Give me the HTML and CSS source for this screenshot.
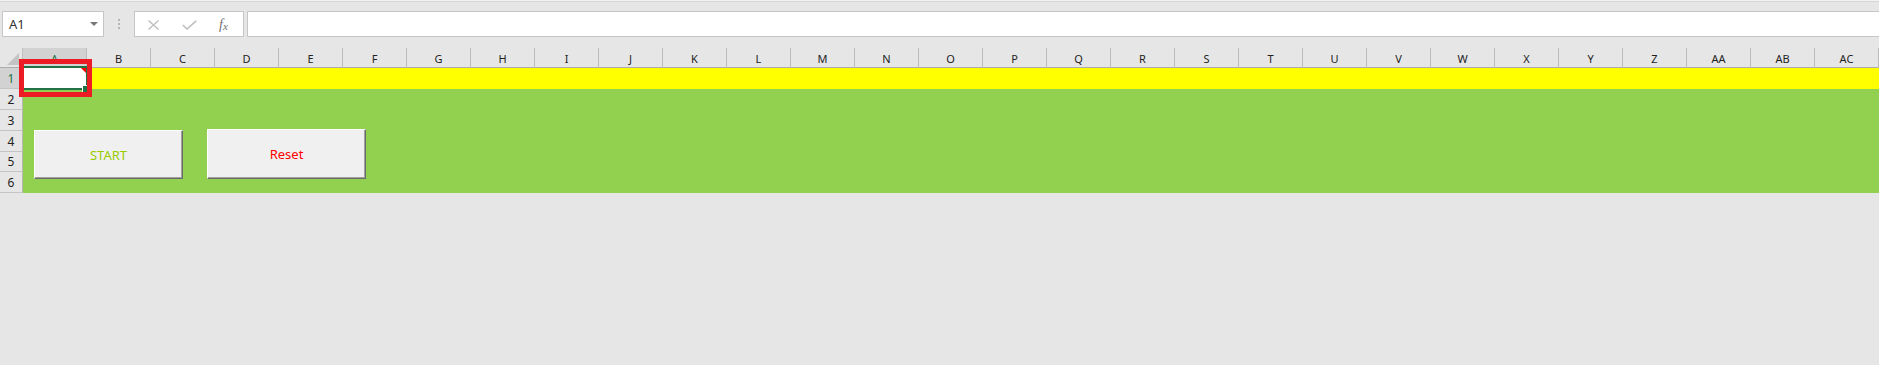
FILE: index.html
```html
<!DOCTYPE html>
<html lang="de">

<head>
    <meta charset="UTF-8">
    <title>Tabelle</title>
    <link rel="stylesheet" href="styles.css">
</head>

<body>

    <!-- Namensfeld und Bearbeitungsleiste -->
    <div class="toolbar">
        <div class="name-box">
            <span>A1</span>
            <span class="caret"></span>
        </div>
        <div class="grip"><i></i><i></i><i></i></div>
        <div class="fx-buttons">
            <svg width="13" height="10" viewBox="0 0 13 10">
                <path d="M1.5 0.5 L11.5 9.5 M11.5 0.5 L1.5 9.5" stroke="#bfbfbf" stroke-width="1.4" fill="none" />
            </svg>
            <svg width="15" height="10" viewBox="0 0 15 10">
                <path d="M0.8 5 L5 9 L14.2 0.8" stroke="#bfbfbf" stroke-width="1.6" fill="none" />
            </svg>
            <span class="fx">f<sub>x</sub></span>
        </div>
        <div class="formula-input"></div>
    </div>

    <!-- Tabellenblatt -->
    <div class="sheet">
        <div class="grid" id="grid">
            <div class="corner"><span class="corner-tri"></span></div>
        </div>

        <div class="selection">
            <span class="comment-mark"></span>
            <span class="fill-handle"></span>
        </div>
        <div class="red-frame"></div>

        <button class="sheet-btn btn-start">START</button>
        <button class="sheet-btn btn-reset">Reset</button>
    </div>

    <script>
        // Spaltenköpfe und Zeilen aufbauen
        const grid = document.getElementById('grid');
        const cols = [];
        for (let i = 0; i < 29; i++) {
            let name = '';
            let n = i;
            if (n >= 26) {
                name = String.fromCharCode(65 + Math.floor(n / 26) - 1);
                n = n % 26;
            }
            cols.push(name + String.fromCharCode(65 + n));
        }

        cols.forEach((c, i) => {
            const head = document.createElement('div');
            head.className = 'col-head' + (i === 0 ? ' active' : '');
            head.textContent = c;
            grid.appendChild(head);
        });

        for (let r = 1; r <= 6; r++) {
            const rh = document.createElement('div');
            rh.className = 'row-head' + (r === 1 ? ' active' : '');
            rh.style.gridRow = r + 1;
            rh.textContent = r;
            grid.appendChild(rh);
        }

        const a1 = document.createElement('div');
        a1.className = 'cell-a1';
        grid.appendChild(a1);

        const yellow = document.createElement('div');
        yellow.className = 'band-yellow';
        grid.appendChild(yellow);

        const green = document.createElement('div');
        green.className = 'band-green';
        grid.appendChild(green);
    </script>

</body>

</html>
```

FILE: styles.css
```css
/* Basis */
* {
    margin: 0;
    padding: 0;
    box-sizing: border-box;
}

body {
    background: #e6e6e6;
    font-family: 'Noto Sans', 'Liberation Sans', sans-serif;
    width: 1879px;
    height: 365px;
    overflow: hidden;
}

/* Bearbeitungsleiste */
.toolbar {
    height: 48px;
    display: flex;
    align-items: flex-start;
    padding: 10px 0 0 2px;
    border-top: 1px solid #f2f2f2;
    box-shadow: inset 0 1px 0 #d6d6d6;
}

.name-box {
    width: 102px;
    height: 26px;
    background: #fff;
    border: 1px solid #c6c6c6;
    display: flex;
    align-items: center;
    justify-content: space-between;
    padding: 0 5px 0 6px;
    font-size: 13px;
    color: #333;
}

.caret {
    width: 0;
    height: 0;
    border-left: 4px solid transparent;
    border-right: 4px solid transparent;
    border-top: 4px solid #777;
    margin-bottom: 1px;
}

.grip {
    width: 30px;
    height: 26px;
    display: flex;
    flex-direction: column;
    align-items: center;
    gap: 2px;
    padding-top: 8px;
}

.grip i {
    display: block;
    width: 2px;
    height: 2px;
    background: #b4b4b4;
}

.fx-buttons {
    width: 110px;
    height: 26px;
    background: #fff;
    border: 1px solid #c6c6c6;
    display: flex;
    align-items: center;
    padding: 1px 0 0 12px;
    gap: 22px;
}

.fx {
    font-family: 'Liberation Serif', 'DejaVu Serif', serif;
    font-style: italic;
    font-size: 14px;
    color: #707070;
    line-height: 1;
}

.fx sub {
    font-size: 11px;
    vertical-align: -1px;
}

.formula-input {
    flex: 1;
    height: 26px;
    margin-left: 3px;
    margin-right: -3px;
    background: #fff;
    border: 1px solid #c6c6c6;
}

/* Tabellenblatt */
.sheet {
    position: relative;
}

.grid {
    display: grid;
    grid-template-columns: 23px repeat(29, 64px);
    grid-template-rows: 20px 21px 21px 21px 21px 20px 21px;
}

.corner {
    grid-column: 1;
    grid-row: 1;
    position: relative;
    border-right: 1px solid #c0c0c0;
    border-bottom: 1px solid #ababab;
}

.corner-tri {
    position: absolute;
    right: 3px;
    bottom: 2px;
    width: 0;
    height: 0;
    border-left: 12px solid transparent;
    border-bottom: 12px solid #c3c3c3;
}

.col-head {
    grid-row: 1;
    display: flex;
    align-items: center;
    justify-content: center;
    font-size: 11px;
    color: #222;
    border-right: 1px solid #bcbcbc;
    border-bottom: 1px solid #ababab;
    padding-top: 1px;
}

.col-head.active {
    background: #d2d2d2;
    color: #217346;
}

.row-head {
    grid-column: 1;
    display: flex;
    align-items: center;
    justify-content: center;
    font-size: 12px;
    color: #222;
    border-right: 1px solid #b5b5b5;
    border-bottom: 1px solid #c4c4c4;
}

.row-head.active {
    background: #d2d2d2;
    color: #217346;
}

.cell-a1 {
    grid-column: 2;
    grid-row: 2;
    background: #fff;
}

.band-yellow {
    grid-column: 3 / -1;
    grid-row: 2;
    background: #ffff00;
}

.band-green {
    grid-column: 2 / -1;
    grid-row: 3 / 8;
    background: #92d050;
}

/* Auswahl A1 mit Kommentar-Markierung */
.selection {
    position: absolute;
    left: 22px;
    top: 18px;
    width: 66px;
    height: 24px;
    border: 2px solid #217346;
}

.comment-mark {
    position: absolute;
    top: 0;
    right: 0;
    width: 0;
    height: 0;
    border-left: 5px solid transparent;
    border-top: 5px solid #ff0000;
}

.fill-handle {
    position: absolute;
    left: 58px;
    top: 17px;
    width: 6px;
    height: 7px;
    background: #217346;
    border-top: 1px solid #fff;
    border-left: 1px solid #fff;
}

.red-frame {
    position: absolute;
    left: 19px;
    top: 11px;
    width: 73px;
    height: 38px;
    border: 5px solid #ed1c24;
}

/* Schaltflächen auf dem Blatt */
.sheet-btn {
    position: absolute;
    background: #f0f0f0;
    border: 1px solid;
    border-color: #fff #6b6b6b #6b6b6b #fff;
    box-shadow: inset -1px -1px 0 #a0a0a0;
    font-family: 'Noto Sans', 'Liberation Sans', sans-serif;
    font-size: 13px;
    cursor: pointer;
}

.btn-start {
    left: 34px;
    top: 82px;
    width: 149px;
    height: 49px;
    color: #99cc00;
}

.btn-reset {
    left: 207px;
    top: 81px;
    width: 159px;
    height: 50px;
    color: #ff0000;
}
```
